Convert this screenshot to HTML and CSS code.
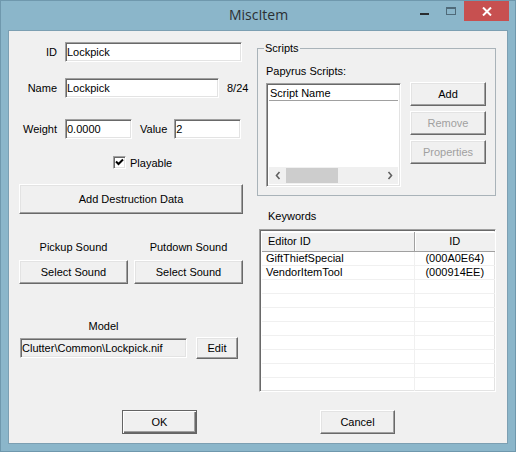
FILE: index.html
```html
<!DOCTYPE html>
<html>
<head>
<meta charset="utf-8">
<title>MiscItem</title>
<link rel="stylesheet" href="styles.css">
</head>
<body>
<div class="window">
  <div class="titlebar">
    <div></div>
    <div class="title">MiscItem</div>
    <div class="controls">
      <span class="ctl-min"></span>
      <span class="ctl-max"></span>
      <span class="ctl-close"><svg width="10" height="9" viewBox="0 0 10 9"><path d="M1 0.5 L9 8.5 M9 0.5 L1 8.5" stroke="#fff" stroke-width="2"/></svg></span>
    </div>
  </div>
  <div class="client">
    <div class="main">
      <div class="left">
        <div class="row r-id"><span class="lbl">ID</span><div class="input w-id">Lockpick</div></div>
        <div class="row r-name"><span class="lbl">Name</span><div class="input w-name">Lockpick</div><span class="count">8/24</span></div>
        <div class="row r-weight"><span class="lbl">Weight</span><div class="input w-num">0.0000</div><span class="lbl2">Value</span><div class="input w-num">2</div></div>
        <div class="check-row">
          <span class="checkbox"><svg width="9" height="9" viewBox="0 0 9 9"><path d="M1 3.5 L3.5 6 L8 1.5" stroke="#000" stroke-width="2" fill="none"/></svg></span>
          <span class="check-text">Playable</span>
        </div>
        <button class="btn btn-destr">Add Destruction Data</button>
        <div class="sounds">
          <div class="sound"><div class="sound-label">Pickup Sound</div><button class="btn btn-sound">Select Sound</button></div>
          <div class="sound"><div class="sound-label">Putdown Sound</div><button class="btn btn-sound">Select Sound</button></div>
        </div>
        <div class="model">
          <div class="model-label">Model</div>
          <div class="model-row"><div class="input ro model-field">Clutter\Common\Lockpick.nif</div><button class="btn btn-edit">Edit</button></div>
        </div>
      </div>
      <div class="right">
        <div class="group">
          <span class="legend">Scripts</span>
          <div class="group-label">Papyrus Scripts:</div>
          <div class="scripts-body">
            <div class="list scripts-list">
              <div class="list-header sh"><span class="sh-cell">Script Name</span></div>
              <div class="list-space"></div>
              <div class="hscroll">
                <span class="arrow"><svg width="6" height="9" viewBox="0 0 6 9"><path d="M4.5 1 L1.5 4.5 L4.5 8" stroke="#606060" stroke-width="1.6" fill="none"/></svg></span>
                <span class="track"><span class="thumb"></span></span>
                <span class="arrow"><svg width="6" height="9" viewBox="0 0 6 9"><path d="M1.5 1 L4.5 4.5 L1.5 8" stroke="#606060" stroke-width="1.6" fill="none"/></svg></span>
              </div>
            </div>
            <div class="script-btns">
              <button class="btn btn-side">Add</button>
              <button class="btn btn-side disabled">Remove</button>
              <button class="btn btn-side disabled">Properties</button>
            </div>
          </div>
        </div>
        <div class="kw-label">Keywords</div>
        <div class="list kw-list">
          <table class="kw-table">
            <thead>
              <tr><th class="c1">Editor ID</th><th class="c2">ID</th></tr>
            </thead>
            <tbody>
              <tr><td class="c1">GiftThiefSpecial</td><td class="c2">(000A0E64)</td></tr>
              <tr><td class="c1">VendorItemTool</td><td class="c2">(000914EE)</td></tr>
              <tr><td class="c1"></td><td class="c2"></td></tr>
              <tr><td class="c1"></td><td class="c2"></td></tr>
              <tr><td class="c1"></td><td class="c2"></td></tr>
              <tr><td class="c1"></td><td class="c2"></td></tr>
              <tr><td class="c1"></td><td class="c2"></td></tr>
              <tr><td class="c1"></td><td class="c2"></td></tr>
              <tr><td class="c1"></td><td class="c2"></td></tr>
              <tr><td class="c1"></td><td class="c2"></td></tr>
            </tbody>
          </table>
        </div>
      </div>
    </div>
    <div class="footer">
      <button class="btn btn-foot default">OK</button>
      <button class="btn btn-foot">Cancel</button>
    </div>
  </div>
</div>
</body>
</html>
```

FILE: styles.css
```css
* { box-sizing: border-box; }
html, body { margin: 0; padding: 0; }
body {
  width: 516px;
  height: 452px;
  overflow: hidden;
  background: #8bb6ca;
  font: 11px "Liberation Sans", Arial, sans-serif;
  color: #000;
}
.window {
  width: 516px;
  height: 452px;
  border: 1px solid #6f98ad;
  background: #8bb6ca;
  display: flex;
  flex-direction: column;
}
.titlebar {
  height: 29px;
  display: grid;
  grid-template-columns: 1fr auto 1fr;
  align-items: start;
}
.title {
  font: 14px "Open Sans", "Noto Sans", sans-serif;
  color: #2b2f33;
  line-height: 18px;
  margin-top: 5px;
  padding-left: 1px;
}
.controls {
  justify-self: end;
  display: flex;
  align-items: flex-start;
  margin-right: 6px;
}
.ctl-min {
  width: 9px;
  height: 2px;
  background: #2a2d30;
  margin-top: 12px;
}
.ctl-max {
  width: 10px;
  height: 8px;
  border: 1px solid #4f6a79;
  border-top-width: 2px;
  margin-left: 17px;
  margin-top: 6px;
}
.ctl-close {
  width: 45px;
  height: 20px;
  background: #c75050;
  margin-left: 8px;
  display: flex;
  align-items: center;
  justify-content: center;
}
.client {
  margin: 0 7px;
  width: 500px;
  height: 414px;
  background: #f0f0f0;
  border: 1px solid #7c9fb2;
  display: flex;
  flex-direction: column;
}
.main {
  display: flex;
  align-items: flex-start;
}
.left {
  width: 232px;
  margin-left: 10px;
  display: flex;
  flex-direction: column;
}
.row {
  display: flex;
  align-items: center;
  height: 20px;
}
.r-id { margin-top: 11px; }
.r-name { margin-top: 16px; }
.r-weight { margin-top: 21px; }
.lbl {
  width: 38px;
  text-align: right;
  margin-right: 8px;
}
.lbl2 { margin: 0 7px 0 8px; }
.count { margin-left: 8px; }
.input {
  height: 20px;
  background: #fff;
  border: 1px solid;
  border-color: #a0a0a0 #fff #fff #a0a0a0;
  box-shadow: inset 1px 1px 0 #696969, inset -1px -1px 0 #e3e3e3;
  padding: 0 1px;
  line-height: 18px;
  white-space: nowrap;
  overflow: hidden;
}
.input.ro { background: #f0f0f0; }
.w-id { width: 177px; }
.w-name { width: 154px; }
.w-num { width: 67px; }
.check-row {
  display: flex;
  align-items: center;
  margin-top: 17px;
  height: 13px;
  padding-left: 94px;
}
.checkbox {
  width: 13px;
  height: 13px;
  background: #fff;
  border: 1px solid;
  border-color: #a0a0a0 #fff #fff #a0a0a0;
  box-shadow: inset 1px 1px 0 #696969, inset -1px -1px 0 #e3e3e3;
  display: flex;
  align-items: center;
  justify-content: center;
}
.check-text { margin-left: 4px; }
.btn {
  font: 11px "Liberation Sans", Arial, sans-serif;
  color: #000;
  background: #f0f0f0;
  border: 1px solid;
  border-color: #fff #696969 #696969 #fff;
  box-shadow: inset -1px -1px 0 #a0a0a0, inset 1px 1px 0 #e3e3e3;
  padding: 0;
  margin: 0;
  display: block;
}
.btn.disabled { color: #a0a0a0; }
.btn.default {
  border-color: #646464;
  box-shadow: inset 1px 1px 0 #fff, inset -1px -1px 0 #696969, inset -2px -2px 0 #a0a0a0;
}
.btn-destr {
  width: 224px;
  height: 30px;
  margin-top: 15px;
}
.sounds {
  display: flex;
  gap: 6px;
  margin-top: 27px;
}
.sound { width: 109px; }
.sound-label {
  text-align: center;
  line-height: 13px;
  height: 13px;
}
.btn-sound {
  width: 109px;
  height: 24px;
  margin-top: 6px;
}
.model { margin-top: 36px; }
.model-label {
  width: 167px;
  margin-left: 1px;
  text-align: center;
  line-height: 13px;
  height: 13px;
}
.model-row {
  display: flex;
  align-items: center;
  margin-top: 4px;
  height: 22px;
  padding-left: 1px;
}
.model-field { width: 167px; }
.btn-edit {
  width: 42px;
  height: 22px;
  margin-left: 9px;
}
.right {
  width: 239px;
  margin-left: 6px;
  display: flex;
  flex-direction: column;
}
.group {
  position: relative;
  margin-top: 17px;
  height: 148px;
  border: 1px solid #a9b3b9;
  padding: 16px 0 0 8px;
}
.legend {
  position: absolute;
  top: -7px;
  left: 6px;
  padding: 0 1px;
  background: #f0f0f0;
  line-height: 13px;
}
.group-label {
  line-height: 13px;
  height: 13px;
}
.scripts-body {
  display: flex;
  align-items: flex-start;
  margin-top: 5px;
}
.list {
  background: #fff;
  border: 1px solid;
  border-color: #a0a0a0 #fff #fff #a0a0a0;
  box-shadow: inset 1px 1px 0 #696969, inset -1px -1px 0 #e3e3e3;
  padding: 2px 2px 2px 2px;
}
.scripts-list {
  width: 135px;
  height: 104px;
  display: flex;
  flex-direction: column;
}
.list-header {
  background: #fff;
  border-bottom: 1px solid #a0a0a0;
}
.sh {
  height: 15px;
  line-height: 14px;
  padding-left: 1px;
  color: #000;
}
.list-space { flex: 1; }
.hscroll {
  height: 17px;
  background: #f0f0f0;
  display: flex;
  align-items: center;
}
.arrow {
  width: 17px;
  height: 17px;
  display: flex;
  align-items: center;
  justify-content: center;
}
.track {
  flex: 1;
  height: 15px;
}
.thumb {
  display: block;
  width: 52px;
  height: 15px;
  background: #cdcdcd;
}
.script-btns {
  margin-left: 9px;
  margin-top: -1px;
  display: flex;
  flex-direction: column;
  gap: 5px;
}
.btn-side {
  width: 76px;
  height: 24px;
}
.kw-label {
  margin-top: 14px;
  line-height: 13px;
  height: 13px;
  padding-left: 11px;
}
.kw-list {
  margin-top: 6px;
  margin-left: 2px;
  width: 237px;
  height: 163px;
  overflow: hidden;
}
.kw-table {
  border-collapse: collapse;
  width: 233px;
  table-layout: fixed;
  font: 11px "Liberation Sans", Arial, sans-serif;
}
.kw-table .c1 { width: 152px; }
.kw-table th {
  height: 19px;
  font-weight: normal;
  background: #f0f0f0;
  border-bottom: 1px solid #a0a0a0;
  box-shadow: inset 0 1px 0 #fff;
  padding: 0;
  line-height: 18px;
}
.kw-table th.c1 {
  text-align: left;
  padding-left: 6px;
  border-right: 1px solid #a0a0a0;
}
.kw-table th.c2 {
  text-align: center;
  box-shadow: inset 1px 1px 0 #fff;
}
.kw-table td {
  height: 14px;
  padding: 0;
  line-height: 13px;
  border-bottom: 1px solid #f0f0f0;
  white-space: nowrap;
}
.kw-table td.c1 {
  padding-left: 4px;
  border-right: 1px solid #f0f0f0;
}
.kw-table td.c2 { text-align: center; }
.footer {
  display: flex;
  gap: 123px;
  padding-left: 113px;
  margin-top: 18px;
}
.btn-foot {
  width: 75px;
  height: 24px;
}
```
